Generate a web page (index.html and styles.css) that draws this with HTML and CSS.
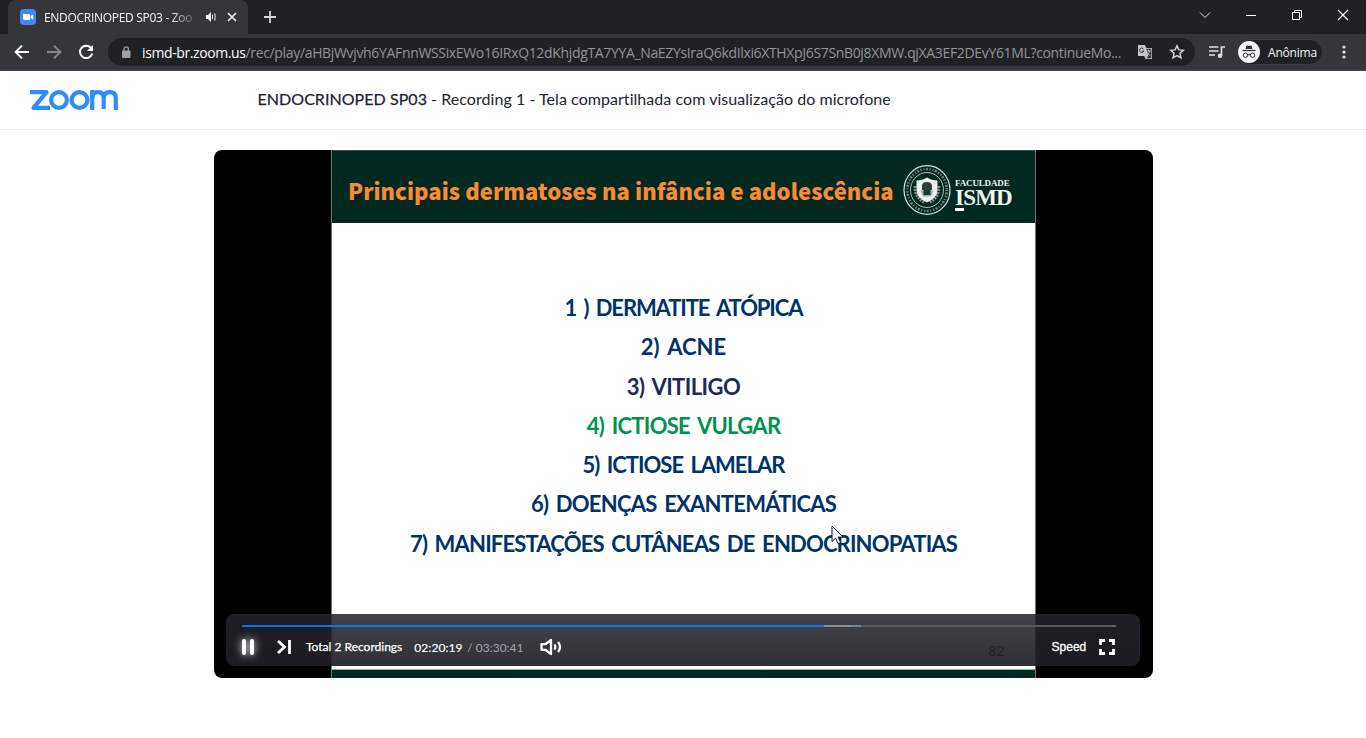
FILE: index.html
```
<!DOCTYPE html>
<html lang="pt-BR">
<head>
<meta charset="utf-8">
<title>ENDOCRINOPED SP03 - Zoom</title>
<link rel="stylesheet" href="styles.css">
</head>
<body>
<div class="tabs">
  <div class="tab">
    <svg class="favicon" width="16" height="16" viewBox="0 0 16 16"><rect width="16" height="16" rx="4" fill="#4087fc"/><path d="M3 5h5.600q1.600 0 1.600 1.600V11H4.600Q3 11 3 9.400zM10.800 7l2.400-1.800v5.600L10.800 9z" fill="#fff"/></svg>
    <span class="tab-title">ENDOCRINOPED SP03 - Zoo</span>
    <svg class="tab-audio" width="12" height="12" viewBox="0 0 12 12"><path d="M1 4h2l3-3v10L3 8H1z" fill="#f1f3f4"/><path d="M7.500 3.800v4.400M9.700 2.300q1 3.700 0 7.400" stroke="#f1f3f4" fill="none"/></svg>
    <svg class="tab-close" width="10" height="10" viewBox="0 0 10 10"><path d="M1 1l8 8M9 1L1 9" stroke="#f1f3f4" stroke-width="1.600"/></svg>
  </div>
  <svg class="new-tab" width="14" height="14" viewBox="0 0 14 14"><path d="M7 1v12M1 7h12" stroke="#d5d7da" stroke-width="1.800"/></svg>
  <div class="window-buttons">
    <svg width="12" height="12" viewBox="0 0 12 12"><path d="M1 3.500l5 5 5-5" stroke="#ddd" fill="none"/></svg>
    <svg width="12" height="12" viewBox="0 0 12 12"><path d="M1 6.500h10" stroke="#fff"/></svg>
    <svg width="12" height="12" viewBox="0 0 12 12"><path d="M1.500 3.500h7v7h-7zM3.500 3V1.500h7v7H9" stroke="#fff" fill="none"/></svg>
    <svg width="12" height="12" viewBox="0 0 12 12"><path d="M1 1l10 10M11 1L1 11" stroke="#fff" stroke-width="1.200"/></svg>
  </div>
</div>
<div class="toolbar">
  <svg class="nav back" width="16" height="16" viewBox="0 0 16 16"><path d="M15 8H2M8 1.600L1.600 8 8 14.400" stroke="#fff" stroke-width="1.900" fill="none"/></svg>
  <svg class="nav" width="16" height="16" viewBox="0 0 16 16"><path d="M1 8h13M8 1.600L14.400 8 8 14.400" stroke="#86888b" stroke-width="1.900" fill="none"/></svg>
  <svg class="nav" width="16" height="16" viewBox="0 0 16 16"><path d="M13.300 4.300A6.200 6.200 0 1 0 14.200 9.500" stroke="#fff" stroke-width="2" fill="none"/><path d="M15 1v6H9z" fill="#fff"/></svg>
  <div class="address">
    <svg class="lock" width="10" height="13" viewBox="0 0 10 13"><rect x="1" y="4.500" width="8.500" height="7.500" rx="1" fill="#9aa0a6"/><path d="M3 5V3a2.200 2.200 0 0 1 4.400 0v2" stroke="#9aa0a6" stroke-width="1.300" fill="none"/></svg>
    <span class="url"><b>ismd-br.zoom.us</b>/rec/play/aHBjWvjvh6YAFnnWSSixEWo16IRxQ12dKhjdgTA7YYA_NaEZYsIraQ6kdIlxi6XTHXpJ6S7SnB0j8XMW.qjXA3EF2DEvY61ML?continueMo...</span>
    <svg class="translate" width="16" height="16" viewBox="0 0 16 16"><path d="M1 1h7l1.300 3H15v11H8.500L7.300 12H1z" fill="#c4c7c9"/><path d="M9.300 4.700h5v9.600H9.400l1.800-2.300z" fill="#35363a"/><path d="M6.500 5A2.200 2.200 0 1 0 6.800 7H4.800" stroke="#35363a" fill="none"/><path d="M9.300 7h4.700M12.700 7q-.6 3-3 4.300M10.300 8.500q1 2.200 3 3.200M11.500 5.700V7" stroke="#c4c7c9" stroke-width=".9" fill="none"/></svg>
    <svg class="star" width="16" height="16" viewBox="0 0 16 16"><path d="M8 1.800l1.850 4.100 4.450.45-3.350 3 .95 4.400L8 11.500l-3.900 2.250.95-4.400-3.350-3 4.450-.45z" stroke="#d0d2d4" stroke-width="1.500" fill="none"/></svg>
  </div>
  <svg class="media" width="17" height="14" viewBox="0 0 17 14"><path d="M1 2h9.500M1 6h9.500M1 10h6M13.500 11V2H17" stroke="#dee1e6" stroke-width="1.700" fill="none"/><circle cx="12" cy="10.800" r="2.200" fill="#dee1e6"/></svg>
  <div class="profile">
    <svg width="22" height="22" viewBox="0 0 22 22"><circle cx="11" cy="11" r="11" fill="#f1f3f4"/><path d="M7.500 8L8.300 5Q8.600 4.400 9.300 4.600L11 5l1.700-.4q.7-.2 1 .4L14.500 8z" fill="#303134"/><path d="M4.500 9.500h13" stroke="#303134" stroke-width="1.200"/><g stroke="#303134" fill="none"><circle cx="7.500" cy="14.200" r="2.200"/><circle cx="14.500" cy="14.200" r="2.200"/><path d="M9.600 14q1.400-1 2.800 0"/></g></svg>
    <span>Anônima</span>
  </div>
  <svg class="more" width="4" height="14" viewBox="0 0 4 14"><g fill="#dee1e6"><circle cx="2" cy="2" r="1.600"/><circle cx="2" cy="7" r="1.600"/><circle cx="2" cy="12" r="1.600"/></g></svg>
</div>
<header class="page-head">
  <svg class="logo" width="90" height="22" viewBox="0 0 90 22" fill="none" stroke="#2d8cff" stroke-width="4.200" stroke-linejoin="round"><path d="M0 3.100H16.500L3.500 18.900H20"/><circle cx="29" cy="11" r="7.900"/><circle cx="49.500" cy="11" r="7.900"/><path d="M62.200 21V9Q62.200 3.100 67.900 3.100Q73.700 3.100 73.700 9V20M73.700 9Q73.700 3.100 79.700 3.100Q85.800 3.100 85.800 9V21"/><path d="M62.200 10V1"/></svg>
  <h1><b>ENDOCRINOPED SP03</b> - Recording 1 - Tela compartilhada com visualização do microfone</h1>
</header>
<main class="player">
  <section class="slide">
    <div class="slide-head">
      <h2>Principais dermatoses na infância e adolescência</h2>
      <svg class="emblem" width="50" height="52" viewBox="0 0 50 52"><g fill="none" stroke="#d8e0dc"><ellipse cx="25" cy="26" rx="23" ry="24.300" stroke-width="1.200"/><ellipse cx="25" cy="26" rx="16.500" ry="17.500" stroke-width=".8"/><ellipse cx="25" cy="26" rx="19.800" ry="21" stroke-width="2.600" stroke-dasharray="1 1.500 2 1.400 1.300 2" opacity=".5"/><path d="M13 22q-1 11 10 17M37 22q1 11-10 17" stroke-width="2.500" stroke-dasharray="2 1" opacity=".6"/></g><path d="M14.500 16.500q6 0 10.500-3 4.500 3 10.500 3V26q0 8-10.500 12.500Q14.500 34 14.500 26z" fill="#edf2ef"/><path d="M20 22q0-4 5-4t5 4v4h-10z" fill="#26443a"/><path d="M18.500 26.500h13l-2.500 6h-8z" fill="#9eafa6"/><path d="M21.500 26h7v5h-7z" fill="#183d31"/></svg>
      <div class="brand"><span class="brand-top">FACULDADE</span><span class="brand-name">ISMD</span><i></i></div>
    </div>
    <ol class="topics">
      <li class="t1">1 ) DERMATITE ATÓPICA</li>
      <li class="t2">2) ACNE</li>
      <li class="t3">3) VITILIGO</li>
      <li class="t4">4) ICTIOSE VULGAR</li>
      <li class="t5">5) ICTIOSE LAMELAR</li>
      <li class="t6">6) DOENÇAS EXANTEMÁTICAS</li>
      <li class="t7">7) MANIFESTAÇÕES CUTÂNEAS DE ENDOCRINOPATIAS</li>
    </ol>
    <div class="slide-foot"></div>
  </section>
  <div class="controls">
    <div class="track"><div class="played"></div><div class="buffer"></div><div class="buffer-end"></div></div>
    <div class="row">
      <svg class="pause" width="14" height="16" viewBox="0 0 14 16"><path d="M3 2v12M11 2v12" stroke="#fff" stroke-width="4" stroke-linecap="round"/></svg>
      <svg class="next" width="16" height="16" viewBox="0 0 16 16"><path d="M2 2l6.500 6L2 14M13.500 1v14" stroke="#fff" stroke-width="2.800" fill="none"/></svg>
      <span class="total">Total 2 Recordings</span>
      <span class="now">02:20:19</span><span class="length">/ 03:30:41</span>
      <svg class="volume" width="22" height="18" viewBox="0 0 22 18"><path d="M1.500 6.200h3.800L11 2v14l-5.700-4.200H1.500z" stroke="#fff" stroke-width="2.300" fill="none" stroke-linejoin="round"/><path d="M14.500 6.300q1.700 2.700 0 5.400M18 4q4 5 0 10" stroke="#fff" stroke-width="2.200" fill="none"/></svg>
      <span class="page-no">82</span>
      <span class="speed">Speed</span>
      <svg class="full" width="18" height="18" viewBox="0 0 18 18"><path d="M2.500 7V2.500H7M11 2.500h4.500V7M15.500 11v4.500H11M7 15.500H2.500V11" stroke="#fff" stroke-width="2.800" fill="none"/></svg>
    </div>
  </div>
  <svg class="cursor" width="14" height="21" viewBox="0 0 14 21"><path d="M1 1v15.500l3.600-3.400 2.500 5.600 2.500-1.100-2.400-5.500h5z" fill="#fff" stroke="#111" stroke-width="1"/></svg>
</main>
</body>
</html>
```
FILE: styles.css
```
* { box-sizing: border-box; }
body { margin: 0; height: 738px; overflow: hidden; background: #fff; font-family: "Open Sans", sans-serif; }
svg { display: block; flex: none; }
span, h1, h2, li { white-space: nowrap; }

.tabs { height: 34px; background: #202124; display: flex; align-items: center; padding-left: 8px; }
.tab { width: 240px; height: 34px; background: #35363a; border-radius: 8px 8px 0 0; display: flex; align-items: center; padding-left: 12px; }
.tab-title { width: 152px; margin-left: 8px; font-size: 12px; letter-spacing: -0.3px; color: #f1f3f4; -webkit-mask-image: linear-gradient(90deg, #000 126px, transparent 155px); mask-image: linear-gradient(90deg, #000 126px, transparent 155px); }
.tab-audio { margin-left: 9px; }
.tab-close { margin-left: 10px; }
.new-tab { margin-left: 15px; }
.window-buttons { margin-left: auto; display: flex; gap: 34px; padding: 0 17px 5px 0; }

.toolbar { height: 37px; background: #35363a; border-bottom: 1px solid #4b4549; display: flex; align-items: center; }
.nav { margin-left: 16px; }
.back { margin-left: 14px; }
.address { width: 1087px; height: 28px; margin-left: 14px; border-radius: 14px; background: #202124; display: flex; align-items: center; padding-left: 13px; }
.url { width: 980px; margin-left: 11px; font-size: 14px; letter-spacing: -0.34px; color: #8f9499; }
.url b { font-weight: 400; letter-spacing: -0.4px; color: #fff; }
.translate { margin-left: 15px; }
.star { margin-left: 16px; }
.media { margin-left: 13px; }
.profile { width: 87px; height: 26px; margin-left: 11px; border: 1px solid #3c4043; border-radius: 13px; background: #202124; display: flex; align-items: center; gap: 8px; padding-left: 1px; font-size: 12px; letter-spacing: -0.2px; color: #f1f3f4; }
.more { margin-left: 19px; }

.page-head { height: 59px; border-bottom: 1px solid #e8e8ed; display: flex; align-items: center; padding-left: 30px; }
.page-head h1 { margin: 0 0 3px 137.500px; font: 400 16px "Lato", sans-serif; letter-spacing: 0.05px; color: #232333; }
.page-head b { font-weight: 400; -webkit-text-stroke: .25px; }

.player { position: relative; width: 939px; height: 528px; margin: 20px 0 0 214px; background: #000; border-radius: 8px; overflow: hidden; }
.slide { width: 705px; height: 528px; margin-left: 117px; background: #fff; border: solid #6c7773; border-width: 0 1px; display: flex; flex-direction: column; }
.slide-head { height: 73px; background: #02291f; border-top: 1px solid #315047; display: flex; align-items: flex-start; padding-left: 16px; }
.slide-head h2 { width: 545px; margin: 23px 0 0; font: 900 22px/32px "Noto Sans CJK SC", sans-serif; letter-spacing: 0.06px; color: #fa8b36; }
.emblem { margin: 13px 0 0 9px; }
.brand { margin: 26px 0 0 3px; display: flex; flex-direction: column; font-family: "Liberation Serif", serif; font-weight: 700; color: #eef3f0; }
.brand-top { font-size: 9px; line-height: 12px; letter-spacing: -0.15px; }
.brand-name { font-size: 23px; line-height: 17px; letter-spacing: -0.8px; }
.brand i { width: 9px; height: 3px; margin-top: 2px; background: #fff; }
.topics { flex: 1; margin: 0; padding: 65px 0 0; list-style: none; text-align: center; font: 700 22px/39.300px "Lato", sans-serif; word-spacing: 3px; color: #00326c; }
.t1 { letter-spacing: -1.1px; }
.t3 { letter-spacing: -0.55px; color: #1f2a52; }
.t4 { letter-spacing: -0.7px; color: #009350; }
.t5 { letter-spacing: -1px; }
.t6 { letter-spacing: -0.75px; }
.t7 { letter-spacing: -0.83px; }
.slide-foot { height: 9px; background: #02291f; border-top: 1px solid #a3afaa; }

.controls { position: absolute; left: 12px; top: 464px; width: 914px; height: 52px; border-radius: 8px; background: linear-gradient(rgba(35,35,43,.86), rgba(30,30,37,.92)); padding: 11px 24px 0 16px; font-family: "Lato", sans-serif; color: #fff; }
.track { height: 2px; background: #585861; display: flex; }
.played { width: 582px; background: #0e72ed; }
.buffer { width: 27px; background: #8f8d9c; }
.buffer-end { width: 10px; background: #72829b; }
.row { height: 40px; display: flex; align-items: center; font-size: 13px; }
.pause { margin-left: -1px; filter: drop-shadow(0 0 4px #fff); }
.next { margin-left: 21px; }
.total { width: 97px; margin: 0 0 2px 14px; font: 12px "Lato", sans-serif; -webkit-text-stroke: .25px; }
.now { width: 48px; margin-left: 12px; font-size: 12px; letter-spacing: 0.06px; -webkit-text-stroke: .2px; }
.length { width: 57px; margin-left: 5px; font-size: 12px; color: #a3a1b3; }
.volume { margin-left: 16px; }
.page-no { width: 18px; margin: 7px 0 0 427px; font: 14px "Open Sans", sans-serif; color: #202027; }
.speed { width: 35px; margin-left: 47px; font: 12px "Liberation Sans", sans-serif; -webkit-text-stroke: .3px; }
.full { margin-left: 12px; }
.cursor { position: absolute; left: 617px; top: 375px; }
```
